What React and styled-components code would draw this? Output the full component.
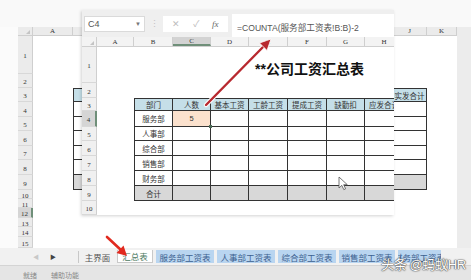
import React from 'react'
import styled, { createGlobalStyle, css } from 'styled-components'

const GlobalStyle = createGlobalStyle`
  html, body { margin: 0; padding: 0; background: #f8f8f8; }
  body { font-family: "Liberation Sans", "Noto Sans CJK SC", sans-serif; }
`

const CJK = `"Liberation Sans", "Noto Sans CJK SC", sans-serif`
const SERIF = `"Liberation Serif", "Noto Sans CJK SC", serif`

// background sheet geometry (B..I sit under the zoomed window, so no text there)
const BG_WIDTHS = [40, 40, 40, 40, 40, 40, 40, 40, 40, 34, 30]
const BG_LETTERS = ['A', '', '', '', '', '', '', '', '', 'J', 'K']
const BG_HEIGHTS = [38, 14, 14, 15, 14, 15, 14, 15, 15, 9, 9, 10, 9, 10, 11]

// zoomed overlay geometry
const OV_WIDTHS = [37, 39, 38, 38, 39, 39, 38, 39]
const OV_LETTERS = 'ABCDEFGH'.split('')
const OV_HEIGHTS = [36, 15, 13, 16, 14, 15, 15, 15, 15, 14]

const HEADERS = ['部门', '人数', '基本工资', '工龄工资', '提成工资', '缺勤扣', '应发合计', '代扣个税', '实发合计']
const DEPTS = ['服务部', '人事部', '综合部', '销售部', '财务部']

const TABS = [
  { name: '主界面', w: 33, kind: 'plain' },
  { name: '汇总表', w: 36, kind: 'active' },
  { name: '服务部工资表', w: 58 },
  { name: '人事部工资表', w: 58 },
  { name: '综合部工资表', w: 58 },
  { name: '销售部工资表', w: 56 },
  { name: '财务部工资表', w: 43 },
]

const Page = styled.div`
  position: relative;
  width: 471px;
  height: 280px;
  overflow: hidden;
  display: flex;
  flex-direction: column;
  background: #f9f9f9;
`
const TopSpace = styled.div`
  height: 27px;
  flex: none;
`
const Desk = styled.div`
  display: flex;
  height: 221px;
  flex: none;
`
const Gutter = styled.div`
  width: 18px;
  flex: none;
  background: #fbfbfb;
`
const Sheet = styled.div`
  width: ${p => p.$w}px;
  flex: none;
  background: #fff;
  display: flex;
  flex-direction: column;
  overflow: hidden;
`
const SideGray = styled.div`
  flex: 1;
  background: #ececec;
`
const GridRow = styled.div`
  display: flex;
  flex: none;
  height: ${p => p.$h}px;
`
const HeadStrip = styled.div`
  display: flex;
  flex: none;
  height: ${p => p.$h}px;
  background: ${p => p.$bg};
  border-bottom: 1px solid #cfcfcf;
  box-sizing: border-box;
`
const Corner = styled.div`
  width: 15px;
  flex: none;
  position: relative;
  border-right: 1px solid #cfcfcf;
  box-sizing: border-box;
  &::after {
    content: '';
    position: absolute;
    right: 2px;
    bottom: 1px;
    border-left: 4px solid transparent;
    border-bottom: 4px solid #c4c4c4;
  }
`
const ColHead = styled.div`
  width: ${p => p.$w}px;
  flex: none;
  box-sizing: border-box;
  display: flex;
  align-items: center;
  justify-content: center;
  font: 7px ${SERIF};
  color: #333;
  border-right: 1px solid #cfcfcf;
  ${p => p.$sel && css`
    background: #d3d3d3;
    border-bottom: 2px solid #6f8f79;
  `}
`
const RowHead = styled.div`
  width: 15px;
  flex: none;
  box-sizing: border-box;
  display: flex;
  align-items: center;
  justify-content: center;
  padding-top: 3px;
  font: 7px ${SERIF};
  color: #333;
  background: ${p => (p.$sel ? '#d5d5d5' : p.$bg)};
  border-bottom: 1px solid #d8d8d8;
  border-right: ${p => (p.$sel ? '2px solid #6f8f79' : '1px solid #cfcfcf')};
  overflow: hidden;
`
const Cell = styled.div`
  position: relative;
  width: ${p => p.$w}px;
  flex: none;
  box-sizing: border-box;
  display: flex;
  align-items: center;
  justify-content: center;
  white-space: nowrap;
  overflow: hidden;
  font: 7.5px ${CJK};
  color: #333;
  background: ${p => p.$bg || 'transparent'};
  ${p => p.$table && css`
    border-right: 1px solid #333;
    border-bottom: 1px solid #333;
  `}
  ${p => p.$first && css`border-left: 1px solid #333;`}
  ${p => p.$top && css`border-top: 1px solid #333;`}
  ${p => p.$handle && css`
    overflow: visible;
    &::after {
      content: '';
      position: absolute;
      right: -2px;
      bottom: -2px;
      width: 3px;
      height: 3px;
      background: #4b6b56;
      z-index: 1;
    }
  `}
`
const TitleArea = styled.div`
  flex: 1;
  display: flex;
  align-items: flex-end;
  padding: 0 0 7px 158px;
  font: bold 14px ${CJK};
  line-height: 1;
  color: #111;
  white-space: nowrap;
`

const Overlay = styled.div`
  position: absolute;
  left: 82px;
  top: 10px;
  width: 312px;
  height: 205px;
  background: #fff;
  display: flex;
  flex-direction: column;
  overflow: hidden;
  box-shadow: -1px 1px 3px rgba(0, 0, 0, 0.18);
`
const FormulaBar = styled.div`
  height: 27px;
  flex: none;
  display: flex;
  align-items: center;
  background: #efefef;
  padding-left: 2px;
  box-sizing: border-box;
`
const NameBox = styled.div`
  width: 61px;
  height: 16px;
  box-sizing: border-box;
  background: #fff;
  border: 1px solid #dadada;
  display: flex;
  align-items: center;
  justify-content: space-between;
  padding: 0 3px;
  font: 9px ${CJK};
  color: #555;
`
const Caret = styled.span`
  font-size: 6px;
  color: #777;
`
const Dots = styled.span`
  width: 18px;
  text-align: center;
  font-size: 9px;
  color: #c2c2c2;
`
const IconBox = styled.div`
  width: 65px;
  height: 16px;
  box-sizing: border-box;
  background: #fff;
  display: flex;
  align-items: center;
  justify-content: space-around;
  padding: 0 3px;
  font: 9px ${CJK};
  color: #bdbdbd;
`
const Fx = styled.span`
  font: italic 9px ${SERIF};
  color: #666;
`
const FormulaBox = styled.div`
  flex: 1;
  margin-left: 4px;
  height: 27px;
  align-self: stretch;
  display: flex;
  align-items: flex-start;
  background: #fff;
  padding: 7px 0 0 5px;
  box-sizing: border-box;
  margin-top: 4px;
`
const FormulaText = styled.span`
  font: 8.6px ${CJK};
  color: #555;
  white-space: nowrap;
  padding: 0 4px 6px 0;
  border-bottom: 2px solid #bd2b31;
`

const TabBar = styled.div`
  height: 17px;
  flex: none;
  display: flex;
  align-items: center;
  background: #f1f1f1;
`
const NavArea = styled.div`
  width: 78px;
  flex: none;
  display: flex;
  gap: 11px;
  padding-left: 33px;
  box-sizing: border-box;
  font-size: 6px;
`
const Nav = styled.span`
  color: ${p => (p.$dim ? '#c8c8c8' : '#444')};
`
const Sep = styled.div`
  width: 1px;
  height: 12px;
  background: #c8c8c8;
  margin-right: 2px;
`
const TabList = styled.div`
  display: flex;
  gap: 3px;
  align-items: center;
`
const Tab = styled.div`
  width: ${p => p.$w}px;
  height: 13px;
  flex: none;
  box-sizing: border-box;
  display: flex;
  align-items: center;
  justify-content: center;
  overflow: hidden;
  white-space: nowrap;
  font: 8.5px ${CJK};
  color: #3c5f8f;
  background: #b9d5f0;
  ${p => p.$kind === 'plain' && css`
    background: transparent;
    color: #555;
  `}
  ${p => p.$kind === 'active' && css`
    background: #fff;
    color: #4c7a62;
    border: 1px solid #c9c9c9;
    border-top: none;
  `}
`
const StatusBar = styled.div`
  height: 15px;
  flex: none;
  display: flex;
  gap: 14px;
  padding: 4px 0 0 23px;
  box-sizing: border-box;
  background: #e5e5e5;
  border-top: 1px solid #d4d4d4;
  font: 7px ${CJK};
  color: #888;
  overflow: hidden;
`
const Watermark = styled.div`
  position: absolute;
  left: 381px;
  top: 254px;
  font: 13px ${CJK};
  color: #fff;
  white-space: nowrap;
  letter-spacing: -0.3px;
  text-shadow: 0 0 1px #444, 0 0 1px #444, 0 0 2px rgba(0, 0, 0, 0.5);
  & span { margin-left: 3px; }
`
const Marks = styled.svg`
  position: absolute;
  left: 0;
  top: 0;
  pointer-events: none;
`

function tableCell(r, c, total, extra) {
  // r: table row (0 = header), c: table col
  if (r === 0) return { text: HEADERS[c], bg: '#c5dfe8' }
  if (r === total) return { text: c === 0 ? '合计' : '', bg: '#d8d8d8' }
  if (c === 0) return { text: DEPTS[r - 1] }
  if (extra && r === 1 && c === 1) return { text: '5', bg: '#fbe1cd', handle: true }
  return { text: '' }
}

function SheetRows({ widths, heights, rowBg, firstCol, lastCol, selRow, title, markC4, textFrom = 0 }) {
  return heights.map((h, i) => {
    const r = i - 2
    const inTable = r >= 0 && r <= 6
    return (
      <GridRow key={i} $h={h}>
        <RowHead $bg={rowBg} $sel={selRow === i}>{i + 1}</RowHead>
        {i === 0 && title ? (
          <TitleArea>{title}</TitleArea>
        ) : (
          widths.map((w, j) => {
            const c = j - firstCol
            if (!inTable || j < firstCol || j > lastCol) return <Cell key={j} $w={w} />
            const d = tableCell(r, c, 6, markC4)
            return (
              <Cell
                key={j}
                $w={w}
                $table
                $first={j === firstCol}
                $top={r === 0}
                $bg={d.bg}
                $handle={d.handle}
              >
                {j >= textFrom ? d.text : ''}
              </Cell>
            )
          })
        )}
      </GridRow>
    )
  })
}

export default function App() {
  return (
    <Page>
      <GlobalStyle />
      <TopSpace />
      <Desk>
        <Gutter />
        <Sheet $w={439}>
          <HeadStrip $h={9} $bg="#ebebeb">
            <Corner />
            {BG_WIDTHS.map((w, j) => (
              <ColHead key={j} $w={w}>{BG_LETTERS[j]}</ColHead>
            ))}
          </HeadStrip>
          <SheetRows
            widths={BG_WIDTHS}
            heights={BG_HEIGHTS}
            rowBg="#ebebeb"
            firstCol={1}
            lastCol={9}
            selRow={11}
            textFrom={9}
          />
        </Sheet>
        <SideGray />
      </Desk>
      <TabBar>
        <NavArea>
          <Nav $dim>◀</Nav>
          <Nav>▶</Nav>
        </NavArea>
        <Sep />
        <TabList>
          {TABS.map(t => (
            <Tab key={t.name} $w={t.w} $kind={t.kind}>{t.name}</Tab>
          ))}
        </TabList>
      </TabBar>
      <StatusBar>
        <span>就绪</span>
        <span>辅助功能</span>
      </StatusBar>

      <Overlay>
        <FormulaBar>
          <NameBox>
            C4
            <Caret>▼</Caret>
          </NameBox>
          <Dots>⋮</Dots>
          <IconBox>
            <span>✕</span>
            <span>✓</span>
            <Fx>fx</Fx>
          </IconBox>
          <FormulaBox>
            <FormulaText>=COUNTA(服务部工资表!B:B)-2</FormulaText>
          </FormulaBox>
        </FormulaBar>
        <HeadStrip $h={10} $bg="#f3f3f3">
          <Corner />
          {OV_WIDTHS.map((w, j) => (
            <ColHead key={j} $w={w} $sel={j === 2}>{OV_LETTERS[j]}</ColHead>
          ))}
        </HeadStrip>
        <SheetRows
          widths={OV_WIDTHS}
          heights={OV_HEIGHTS}
          rowBg="#f0f0f0"
          firstCol={1}
          lastCol={7}
          selRow={3}
          title="**公司工资汇总表"
          markC4
        />
      </Overlay>

      <Marks width="471" height="280" viewBox="0 0 471 280">
        {/* arrow from C4 up to the formula */}
        <line x1="206" y1="105" x2="264" y2="46" stroke="#fff" strokeWidth="4.5" strokeLinecap="round" />
        <line x1="206" y1="105" x2="264" y2="46" stroke="#b8292f" strokeWidth="2.4" strokeLinecap="round" />
        <polygon points="271,39 267,50.5 259.5,43" fill="#b8292f" stroke="#fff" strokeWidth="0.8" />
        {/* arrow to the 汇总表 tab */}
        <line x1="107" y1="237" x2="121" y2="250" stroke="#e12a1f" strokeWidth="2.6" strokeLinecap="round" />
        <polygon points="127,256 116.5,253 123.5,245.5" fill="#e12a1f" />
        {/* mouse pointer */}
        <path
          d="M339 177 L339 188 L341.8 185.4 L343.8 189.6 L345.6 188.8 L343.7 184.7 L347.3 184.7 Z"
          fill="#fff"
          stroke="#555"
          strokeWidth="0.8"
          strokeLinejoin="round"
        />
      </Marks>
      <Watermark>
        头条<span>@蚂蚁HR</span>
      </Watermark>
    </Page>
  )
}
